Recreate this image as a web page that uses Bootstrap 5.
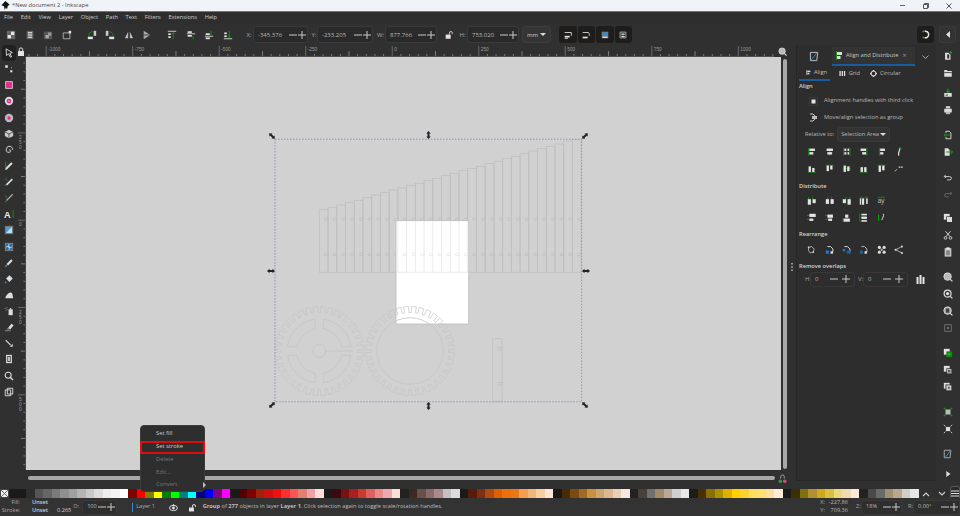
<!DOCTYPE html>
<html lang="en">
<head>
<meta charset="UTF-8">
<title>Inkscape</title>
<link href="https://cdn.jsdelivr.net/npm/bootstrap@5.3.0/dist/css/bootstrap.min.css" rel="stylesheet">
<style>
    html, body { height: 100%; overflow: hidden; }
    body { background: #303030; color: #cfcfcf; font: 6px/1 "Open Sans", "Liberation Sans", sans-serif; }
    svg { display: block; }
    .app { width: 960px; height: 516px; }

    .titlebar { height: 12px; background: #f0f4f9; color: #444; border-bottom: 1px solid #777; font-size: 5.7px; flex: none; }
    .win-icon { margin: 0 2px 0 1px; width: 9px; height: 9px; }
    .win-btn { width: 23px; height: 11px; }

    .menubar { height: 12px; gap: 7.7px; padding-left: 4px; background: #2e2e2e; font-size: 5.7px; flex: none; }

    .toolbar { height: 21px; padding-left: 2px; background: #303030; flex: none; }
    .tbtn { width: 18.5px; height: 17px; }
    .tbtn svg { width: 10px; height: 10px; }
    .tgroup-gap { margin-left: 6.5px; }
    .tlabel { color: #a8a8a8; flex: none; }
    .spinbox { height: 17px; background: #2a2a2a; border: 1px solid #393939; border-radius: 3px; padding-left: 4px; color: #b8b8b8; flex: none; }
    .spinbox .pm { width: 8px; height: 8px; margin-right: 1px; }
    .lb-x { width: 6.5px; margin-left: 9.5px; }
    .lb-y { width: 5.5px; margin-left: 3.5px; }
    .lb-w { width: 8px; margin-left: 4px; }
    .lb-h { width: 7.5px; margin-left: 1px; }
    .lb-z { width: 5px; margin-left: 8px; }
    .lb-r { width: 5px; margin-left: 6px; }
    .sp-x { width: 55px; }
    .sp-y { width: 56px; }
    .sp-w { width: 52px; }
    .sp-h { width: 52px; }
    .lock-gap { margin-left: 3px; }
    .unit-btn { width: 29px; height: 17px; margin-left: 3px; background: #353535; border: 1px solid #3d3d3d; border-radius: 3px; gap: 2px; }
    .caret-d { width: 0; height: 0; border-left: 3px solid transparent; border-right: 3px solid transparent; border-top: 3px solid #ddd; }
    .dark-btn { background: #1f1d1c; border-radius: 3px; }
    .dbtn-w { width: 17.5px; height: 17px; margin-right: 1px; }
    .plain-btn { width: 17px; height: 17px; background: #333; border: 1px solid #3a3a3a; border-radius: 3px; }

    .workspace { height: 444px; flex: none; }
    .tools { width: 17px; background: #303030; flex: none; }
    .tool { height: 16.14px; }
    .tool svg { width: 10px; height: 10px; }
    .tool-on { background: #202020; border-radius: 3px; width: 14px; margin-left: 2px; }

    .canvas-col { width: 770px; flex: none; }
    .ruler-top-row { height: 12px; }
    .ruler-corner { width: 9px; }
    .ruler-corner svg { width: 8px; height: 9px; }
    .ruler-side { width: 9px; }
    .canvas-row { height: 413px; }
    .stage { width: 755px; height: 413px; background: #d1d1d1; }
    .vscroll-wrap { width: 6px; padding: 2px 0 1px 2px; }
    .vscroll-wrap div { width: 4px; height: 100%; background: #a8a8a8; border-radius: 2px; }
    .zoom-fix { width: 9px; height: 9px; margin-left: 0; }
    .hscroll-row { height: 19px; padding-left: 11px; padding-top: 6px; }
    .hscroll { width: 750px; height: 4px; background: #a8a8a8; border-radius: 2px; }
    .corner-icon { width: 9px; height: 10px; margin-left: 3px; margin-top: -2px; }

    .dock { width: 149px; flex: none; }
    .dock-grip { width: 9px; color: #ccc; }
    .dock-panel { width: 140px; height: 436px; background: #2d2d2d; border-left: 1px solid #272727; border-bottom: 1px solid #272727; }
    .dock-tabs { height: 21px; padding-top: 2px; }
    .dtab-icon { width: 35px; }
    .dtab-icon svg { width: 11px; height: 11px; }
    .dtab { width: 83px; height: 19px; border-bottom: 2px solid #1b5c9e; background: #333; gap: 3px; padding-left: 4px; color: #c8c8c8; font-size: 5.7px; }
    .dtab svg { width: 7px; height: 9px; }
    .dtab-x { margin-left: 1px; color: #999; font-size: 7px; }
    .dtab-more { width: 20px; }
    .subtabs { height: 15px; padding-left: 2px; }
    .stab { height: 15px; gap: 3px; padding: 0 3px 0 7px; color: #bdbdbd; font-size: 5.7px; }
    .stab svg { width: 7px; height: 7px; }
    .stab-on { border-bottom: 2px solid #1b5c9e; width: 31px; margin-right: 2px; }
    .stab-grid { width: 31px; }
    .sect { padding-left: 2px; color: #d4d4d4; font-weight: 600; font-size: 5.7px; }
    .sect-a { height: 12px; }
    .sect-b { height: 14.5px; padding-top: 3.5px; }
    .check-row { height: 16.5px; padding-left: 12px; gap: 6px; color: #b8b8b8; font-size: 5.7px; }
    .check-row svg { width: 9px; height: 9px; }
    .rel-row { height: 17px; padding-left: 8px; gap: 3px; font-size: 5.7px; color: #b8b8b8; }
    .rel-btn { width: 53px; height: 15px; background: #333; border: 1px solid #3a3a3a; border-radius: 3px; padding: 0 3px; }
    .iconrow { height: 17.2px; padding-left: 6.5px; }
    .iconrow .ib { width: 17.3px; }
    .iconrow svg { width: 9.500px; height: 9.500px; }
    .ov-row { height: 16px; padding-left: 8px; color: #a8a8a8; margin-top: -1px; }
    .ov-lb { width: 5px; flex: none; }
    .sp-ov { width: 45px; height: 15px; margin-right: 3px; background: #2d2d2d; border-color: #383838; }
    .sp-ov .pm { margin-right: 4px; }
    .ov-icon { width: 9px; height: 9px; margin-left: 5px; }

    .cmdbar { width: 24px; padding-top: 2.5px; flex: none; }
    .cmd { height: 17px; }
    .cmd svg { width: 10px; height: 10px; }
    .cmd-sep { height: 7.8px; }
    .cmd-sep-s { height: 3px; }

    .palette-bar { height: 9px; flex: none; }
    .pal-x { width: 9px; height: 9px; background: #eee; border: 1px solid #444; }
    .swatches { width: 909px; }
    .swatch { flex: 1 1 0; }
    .pal-btn { width: 16px; }
    .pal-btn svg { width: 8px; height: 6px; }
    .pal-menu { width: 10px; height: 14px; margin-top: -3px; background: #2a2a2a; border: 1px solid #555; border-radius: 2px; }
    .pal-menu svg { width: 8px; height: 7px; }

    .statusbar { height: 18px; flex: none; background: #333; font-size: 5.6px; }
    .fs-box { width: 72px; }
    .fs-l { width: 20px; text-align: right; color: #aaa; }
    .fs-v { width: 27px; padding-left: 12px; white-space: nowrap; font-weight: 600; }
    .fs-line { height: 8px; }
    .op-label { margin-left: 2px; color: #aaa; }
    .sp-o { width: 35px; height: 15px; margin-left: 3px; background: #2e2e2e; }
    .layer-mark { width: 1px; height: 9px; background: #2f8fd8; margin-left: 15px; margin-right: 3px; }
    .layer-name { width: 24px; color: #aaa; }
    .st-icon { width: 9px; height: 9px; margin-left: 9px; }
    .st-icon2 { margin-left: 10px; }
    .msg { margin-left: 6px; width: 255px; white-space: nowrap; font-size: 5.65px; color: #bdbdbd; }
    .coords { width: 28px; margin-left: 365px; color: #aaa; }
    .coord-line { height: 8px; }
    .coord-v { flex-grow: 1; text-align: right; color: #b5b5b5; }
    .sp-z { width: 41px; height: 15px; background: #2e2e2e; }
    .sp-r { width: 47px; height: 15px; background: #2e2e2e; }

    .ctx-menu { left: 140px; top: 425px; width: 65px; height: 67px; min-width: 0; padding: 2px 0 0; background: #2e2e2e; border: 1px solid #3c3c3c; border-radius: 4px; font-size: 5.8px; z-index: 5; }
    .ctx-item { height: 12.6px; padding: 0 0 0 15px; color: #cfcfcf; display: flex; align-items: center; }
    .ctx-item.disabled { color: #777; }
    .ctx-red { border: 2px solid #d90f0f; padding-left: 14px; width: 65px; margin-left: -1px; height: 13px; }
    .ctx-arrow { margin-left: 26px; border-top: 3px solid transparent; border-bottom: 3px solid transparent; border-left: 3px solid #bbb; }
</style>
</head>
<body>

<svg width="0" height="0" class="position-absolute">
    <symbol id="minus" viewBox="0 0 8 8"><path d="M0 4h8" stroke="#c8c8c8" stroke-width="1"/></symbol>
    <symbol id="plus" viewBox="0 0 8 8"><path d="M0 4h8M4 0v8" stroke="#c8c8c8" stroke-width="1"/></symbol>
</svg>

<div class="app d-flex flex-column position-relative">

    <!-- window title -->
    <div class="titlebar d-flex align-items-center">
        <svg class="win-icon" viewBox="0 0 12 12"><path d="M6 0L11.500 5 9 6.500 8 11 6.500 8.500 5 12 4 7 .5 5.500z" fill="#111"/></svg>
        <span>*New document 2 - Inkscape</span>
        <div class="ms-auto d-flex">
            <div class="win-btn d-flex align-items-center justify-content-center"><svg width="5" height="5" viewBox="0 0 5 5"><path d="M0 2.500h5" stroke="#666"/></svg></div>
            <div class="win-btn d-flex align-items-center justify-content-center"><svg width="6" height="6" viewBox="0 0 6 6"><path d="M.5 1.500h4v4h-4zM1.500 1.500v-1h4v4h-1" fill="none" stroke="#555"/></svg></div>
            <div class="win-btn d-flex align-items-center justify-content-center"><svg width="6" height="6" viewBox="0 0 6 6"><path d="M.5.5l5 5M5.500.5l-5 5" stroke="#555"/></svg></div>
        </div>
    </div>

    <!-- menu -->
    <div class="menubar d-flex align-items-center">
        <span>File</span><span>Edit</span><span>View</span><span>Layer</span><span>Object</span><span>Path</span><span>Text</span><span>Filters</span><span>Extensions</span><span>Help</span>
    </div>

    <!-- commands bar -->
    <div class="toolbar d-flex align-items-center">
        <div id="tbGroup1" class="d-flex"></div>
        <div id="tbGroup2" class="d-flex tgroup-gap"></div>
        <div id="tbGroup3" class="d-flex tgroup-gap"></div>
        <span class="tlabel lb-x">X:</span>
        <div class="spinbox sp-x d-flex align-items-center"><span class="flex-grow-1">-345.376</span><svg class="pm"><use href="#minus"/></svg><svg class="pm"><use href="#plus"/></svg></div>
        <span class="tlabel lb-y">Y:</span>
        <div class="spinbox sp-y d-flex align-items-center"><span class="flex-grow-1">-233.205</span><svg class="pm"><use href="#minus"/></svg><svg class="pm"><use href="#plus"/></svg></div>
        <span class="tlabel lb-w">W:</span>
        <div class="spinbox sp-w d-flex align-items-center"><span class="flex-grow-1">877.766</span><svg class="pm"><use href="#minus"/></svg><svg class="pm"><use href="#plus"/></svg></div>
        <div class="tbtn lock-gap d-flex align-items-center justify-content-center"><svg viewBox="0 0 12 12"><rect x="2" y="5.500" width="6" height="5" fill="#e4e4e4"/><path d="M6.500 5.500V3.500a1.700 1.700 0 0 1 3.400 0V5" fill="none" stroke="#e4e4e4"/></svg></div>
        <span class="tlabel lb-h">H:</span>
        <div class="spinbox sp-h d-flex align-items-center"><span class="flex-grow-1">753.020</span><svg class="pm"><use href="#minus"/></svg><svg class="pm"><use href="#plus"/></svg></div>
        <div class="unit-btn d-flex align-items-center justify-content-center"><span>mm</span><span class="caret-d"></span></div>
        <div id="tbGroup4" class="d-flex ms-2"></div>
        <div class="ms-auto d-flex me-1">
            <div class="dark-btn dbtn-w d-flex align-items-center justify-content-center"><svg width="11" height="11" viewBox="0 0 12 12"><path d="M5 2.500a3.600 3.600 0 1 1 0 7" fill="none" stroke="#e8e8e8" stroke-width="1.600"/><path d="M3.500 2v1.600M3.500 8.500v1.600" stroke="#18a818" stroke-width="1.800"/></svg></div>
            <div class="plain-btn d-flex align-items-center justify-content-center ms-1"><svg width="6" height="7" viewBox="0 0 6 7"><path d="M5 0v7L1 3.500z" fill="#ddd"/></svg></div>
        </div>
    </div>

    <div class="workspace d-flex">
        <!-- tool box -->
        <div id="tools" class="tools d-flex flex-column"></div>

        <!-- rulers, canvas, scrollbars -->
        <div class="canvas-col d-flex flex-column">
            <div class="ruler-top-row d-flex">
                <div class="ruler-corner d-flex align-items-center justify-content-center"><svg viewBox="0 0 8 9"><rect x="1" y="4" width="6" height="5" rx=".5" fill="#e4e4e4"/><path d="M2.300 4V2.600a1.700 1.700 0 0 1 3.400 0V4" fill="none" stroke="#e4e4e4"/></svg></div>
                <svg id="rulerTop" width="755" height="12" viewBox="26 0 755 12"></svg>
                <svg class="zoom-fix align-self-center ms-1" viewBox="0 0 12 12"><circle cx="5.500" cy="5.500" r="4.300" fill="#bbb" stroke="#ddd"/><path d="M8.500 8.500l3 3" stroke="#ddd" stroke-width="1.500"/></svg>
            </div>
            <div class="canvas-row d-flex">
                <svg id="rulerLeft" class="ruler-side" width="9" height="413" viewBox="0 57 9 413"></svg>
                <div class="stage"><svg id="drawing" width="755" height="413" viewBox="26 57 755 413"></svg></div>
                <div class="vscroll-wrap"><div></div></div>
            </div>
            <div class="hscroll-row d-flex">
                <div class="hscroll"></div>
                <svg class="corner-icon" viewBox="0 0 10 11"><path d="M3 5V3a2 2 0 0 1 4 0v2" fill="none" stroke="#aaa"/><circle cx="2.500" cy="8" r="2" fill="#2a9a4a"/><circle cx="7.500" cy="8" r="2" fill="#d64a7a"/></svg>
            </div>
        </div>

        <!-- Align and Distribute dock -->
        <div class="dock d-flex">
            <div class="dock-grip d-flex align-items-center justify-content-center"><svg width="2" height="8" viewBox="0 0 2 8"><path d="M1 0v1.400M1 3.300v1.400M1 6.600V8" stroke="#ddd" stroke-width="1.200"/></svg></div>
            <div class="dock-panel">
                <div class="dock-tabs d-flex">
                    <div class="dtab-icon d-flex align-items-center justify-content-center"><svg viewBox="0 0 12 12"><path d="M1.500 1.500h8l-1 9h-7z" fill="none" stroke="#ccc"/><path d="M1.500 11l7-9" stroke="#3a8fc8"/></svg></div>
                    <div class="dtab d-flex align-items-center"><svg viewBox="0 0 7 9"><path d="M.5 0v9" stroke="#109a10"/><rect x="1" y="1" width="5" height="3" fill="#ddd"/><rect x="1" y="5" width="3.500" height="3" fill="#ddd"/></svg><span>Align and Distribute</span><span class="dtab-x">×</span></div>
                    <div class="dtab-more d-flex align-items-center justify-content-center"><svg width="7" height="4" viewBox="0 0 7 4"><path d="M.5.5L3.500 3.500 6.500.5" fill="none" stroke="#aaa"/></svg></div>
                </div>
                <div class="subtabs d-flex">
                    <div class="stab stab-on d-flex align-items-center"><svg viewBox="0 0 8 8"><path d="M1 0v8" stroke="#dcdcdc"/><rect x="2" y="1" width="5" height="2.400" fill="#ddd"/><rect x="2" y="4.600" width="3.400" height="2.400" fill="#ddd"/></svg><span>Align</span></div>
                    <div class="stab stab-grid d-flex align-items-center"><svg viewBox="0 0 8 8"><path d="M.5 1h1.600v6H.5zM3.200 1h1.600v6H3.200zM5.900 1h1.600v6H5.900z" fill="#ddd"/></svg><span>Grid</span></div>
                    <div class="stab d-flex align-items-center"><svg viewBox="0 0 8 8"><circle cx="4" cy="4" r="2.800" fill="none" stroke="#ddd" stroke-width="1.200"/><circle cx="4" cy=".9" r=".9" fill="#ddd"/><circle cx="4" cy="7.100" r=".9" fill="#ddd"/><circle cx=".9" cy="4" r=".9" fill="#ddd"/><circle cx="7.100" cy="4" r=".9" fill="#ddd"/></svg><span>Circular</span></div>
                </div>
                <div class="sect sect-a d-flex align-items-center">Align</div>
                <div class="check-row d-flex align-items-center"><svg viewBox="0 0 9 9"><rect x=".5" y=".5" width="8" height="8" fill="none" stroke="#0c6a0c" stroke-dasharray="1 1"/><rect x="2.500" y="2.500" width="4" height="4" fill="#e4e4e4"/></svg><span>Alignment handles with third click</span></div>
                <div class="check-row d-flex align-items-center"><svg viewBox="0 0 9 9"><path d="M1 1h3l2 2v3L4 8H1" fill="none" stroke="#ccc"/><rect x="3" y="3" width="5" height="3" fill="#bbb"/></svg><span>Move/align selection as group</span></div>
                <div class="rel-row d-flex align-items-center"><span>Relative to:</span><div class="rel-btn d-flex align-items-center justify-content-between"><span>Selection Area</span><span class="caret-d"></span></div></div>
                <div id="row1" class="iconrow d-flex align-items-center"></div>
                <div id="row2" class="iconrow d-flex align-items-center"></div>
                <div class="sect sect-b d-flex align-items-center">Distribute</div>
                <div id="row3" class="iconrow d-flex align-items-center"></div>
                <div id="row4" class="iconrow d-flex align-items-center"></div>
                <div class="sect sect-b d-flex align-items-center">Rearrange</div>
                <div id="row5" class="iconrow d-flex align-items-center"></div>
                <div class="sect sect-b d-flex align-items-center">Remove overlaps</div>
                <div class="ov-row d-flex align-items-center">
                    <span class="ov-lb">H:</span>
                    <div class="spinbox sp-ov d-flex align-items-center"><span class="flex-grow-1">0</span><svg class="pm"><use href="#minus"/></svg><svg class="pm"><use href="#plus"/></svg></div>
                    <span class="ov-lb">V:</span>
                    <div class="spinbox sp-ov d-flex align-items-center"><span class="flex-grow-1">0</span><svg class="pm"><use href="#minus"/></svg><svg class="pm"><use href="#plus"/></svg></div>
                    <svg class="ov-icon" viewBox="0 0 9 9"><path d="M.5 2h2v7h-2zM3.500 0h2v9h-2zM6.500 2h2v7h-2z" fill="#e4e4e4"/></svg>
                </div>
            </div>
        </div>

        <!-- right hand commands -->
        <div id="cmdbar" class="cmdbar d-flex flex-column"></div>
    </div>

    <!-- palette -->
    <div class="palette-bar d-flex">
        <svg class="pal-x" viewBox="0 0 9 9"><path d="M0 0l9 9M9 0L0 9" stroke="#b33" stroke-width="1.200"/></svg>
        <div id="swatches" class="swatches d-flex"></div>
        <div class="pal-btn d-flex align-items-center justify-content-center"><svg viewBox="0 0 8 6"><path d="M1 5l3-3 3 3" fill="none" stroke="#ccc" stroke-width="1.200"/></svg></div>
        <div class="pal-btn d-flex align-items-center justify-content-center"><svg viewBox="0 0 8 6"><path d="M1 1l3 3 3-3" fill="none" stroke="#ccc" stroke-width="1.200"/></svg></div>
        <div class="pal-menu d-flex align-items-center justify-content-center"><svg viewBox="0 0 8 7"><path d="M0 1h8M0 3.500h8M0 6h8" stroke="#ddd" stroke-width="1.200"/></svg></div>
    </div>

    <!-- status bar -->
    <div class="statusbar d-flex align-items-center">
        <div class="fs-box d-flex flex-column">
            <div class="fs-line d-flex align-items-center"><span class="fs-l">Fill:</span><span class="fs-v">Unset</span></div>
            <div class="fs-line d-flex align-items-center"><span class="fs-l">Stroke:</span><span class="fs-v">Unset</span><span class="ms-auto">0.265</span></div>
        </div>
        <span class="op-label">O:</span>
        <div class="spinbox sp-o d-flex align-items-center"><span class="flex-grow-1">100</span><svg class="pm"><use href="#minus"/></svg><svg class="pm"><use href="#plus"/></svg></div>
        <span class="layer-mark"></span>
        <span class="layer-name">Layer 1</span>
        <svg class="st-icon" viewBox="0 0 9 9"><ellipse cx="4.500" cy="5" rx="4" ry="2.700" fill="none" stroke="#ddd"/><circle cx="4.500" cy="5" r="1.500" fill="#ddd"/><path d="M4.500 1v2" stroke="#ddd"/></svg>
        <svg class="st-icon st-icon2" viewBox="0 0 9 9"><rect x="1" y="4.500" width="5" height="4" fill="#e4e4e4"/><path d="M4.500 4.500V3a1.500 1.500 0 0 1 3 0v1" fill="none" stroke="#e4e4e4"/></svg>
        <span class="msg"><b>Group</b> of <b>277</b> objects in layer <b>Layer 1</b>. Click selection again to toggle scale/rotation handles.</span>
        <div class="coords d-flex flex-column">
            <div class="coord-line d-flex align-items-center"><span>X:</span><span class="coord-v">-227.86</span></div>
            <div class="coord-line d-flex align-items-center"><span>Y:</span><span class="coord-v">709.36</span></div>
        </div>
        <span class="tlabel lb-z">Z:</span>
        <div class="spinbox sp-z d-flex align-items-center"><span class="flex-grow-1">18%</span><svg class="pm"><use href="#minus"/></svg><svg class="pm"><use href="#plus"/></svg></div>
        <span class="tlabel lb-r">R:</span>
        <div class="spinbox sp-r d-flex align-items-center"><span class="flex-grow-1">0.00°</span><svg class="pm"><use href="#minus"/></svg><svg class="pm"><use href="#plus"/></svg></div>
    </div>

    <!-- swatch context menu -->
    <div class="dropdown-menu show position-absolute ctx-menu">
        <div class="dropdown-item ctx-item">Set fill</div>
        <div class="dropdown-item ctx-item ctx-red">Set stroke</div>
        <div class="dropdown-item ctx-item disabled">Delete</div>
        <div class="dropdown-item ctx-item disabled">Edit...</div>
        <div class="dropdown-item ctx-item disabled">Convert<span class="ctx-arrow"></span></div>
    </div>
</div>

<script src="https://cdn.jsdelivr.net/npm/bootstrap@5.3.0/dist/js/bootstrap.bundle.min.js"></script>
<script>
    const W = '#e4e4e4', G = '#109a10', D = '#8a8a8a', B = '#2f8fd8', P = '#e8278f';
    const rect = (x, y, w, h, f = W) => `<rect x="${x}" y="${y}" width="${w}" height="${h}" fill="${f}"/>`;
    const line = (d, c = G, sw = 1) => `<path d="${d}" stroke="${c}" stroke-width="${sw}" fill="none"/>`;

    const icons = {
        selall: rect(1, 1, 10, 10, '#666') + rect(2, 6, 4, 4) + rect(6, 2, 4, 4),
        seltouch: rect(2, 1, 8, 10, '#666') + line('M3.500 3h5M3.500 5h5M3.500 7h5M3.500 9h5', W),
        seldim: rect(1, 2, 10, 9, '#555') + rect(3, 6, 4, 4, '#aaa') + rect(6, 3, 4, 4, '#999'),
        desel: line('M1.500 3.500h8v7h-8z', '#bbb') + rect(8, 1, 3, 3),
        rotl: rect(1, 8, 6, 3) + rect(8, 1, 3, 6, '#ccc') + line('M2 7A5 5 0 0 1 7 2'),
        rotr: rect(1, 1, 3, 6, '#ccc') + rect(5, 8, 6, 3) + line('M5 2A5 5 0 0 1 10 7'),
        fliph: '<path d="M5 2v8H1zM7 2v8h4z" fill="#bbb"/>',
        flipv: '<path d="M2 1l8 5-8 5z" fill="#aaa"/><path d="M2 6h8" stroke="#333"/>',
        rtop: line('M1 1.500h10', W) + line('M7.500 11V3M5.500 5l2-2 2 2') + rect(1.500, 4, 3, 2) + rect(1.500, 7.500, 3, 2),
        rup: line('M1 4.500h10', W) + rect(2, 1.500, 5, 2) + rect(2, 6, 5, 2) + line('M8.500 11V7'),
        rdown: line('M1 7.500h10', W) + rect(2, 4, 5, 2) + rect(2, 9, 5, 2) + line('M8.500 1v5'),
        rbot: line('M1 10.500h10', W) + line('M7.500 1v8M5.500 7l2 2 2-2') + rect(1.500, 3, 3, 2) + rect(1.500, 6.500, 3, 2),
        sc1: line('M2 3h8v4', W) + rect(2, 7, 6, 2) + line('M2 10h4', W),
        sc2: line('M2 3h7l1 2v2', W) + rect(2, 8, 6, 2),
        sc3: rect(2, 2, 8, 8, '#777') + rect(3, 3, 6, 4, B) + rect(3, 8, 6, 1.500),
        sc4: line('M2.500 2.500h7v7h-7z', '#bbb') + rect(4, 4, 4, 2, '#9cc') + rect(4, 7, 4, 1.500),

        sel: '<path d="M2.500 1L10 5.500 7 6.500 9 10.500 7.500 11 5.500 7 3 9z" fill="#222" stroke="#eee"/>',
        node: rect(1.500, 1.500, 3, 3) + rect(7.500, 7.500, 2.500, 2.500) + line('M9 3.500v2', '#888'),
        rct: rect(1.500, 1.500, 9, 9, '#ddd') + rect(2.500, 2.500, 7, 7, P),
        ell: '<circle cx="6" cy="6" r="5" fill="#ddd"/><circle cx="6" cy="6" r="2.800" fill="' + P + '"/><circle cx="6" cy="6" r="1" fill="#ddd"/>',
        star: '<circle cx="6" cy="6" r="5" fill="#bbb"/><circle cx="6" cy="6" r="2" fill="' + P + '"/>',
        box3: '<path d="M6 1l5 2.500v5L6 11 1 8.500v-5z" fill="#ccc"/><path d="M6 6L1 3.500M6 6l5-2.500M6 6v5" stroke="#444"/>',
        spiral: '<path d="M6 6a1.500 1.500 0 0 1 2 1.500 3 3 0 0 1-5 0A4.500 4.500 0 0 1 6 1.500 4.500 4.500 0 0 1 10.500 6" fill="none" stroke="#bbb" stroke-width="1.300"/>',
        pencil: line('M2 10L9.500 2.500', '#ddd', 2.500) + line('M2 1v8', G, 1.200) + line('M1 11L2.500 9.500', '#888'),
        pen: line('M3 9.500L10 2.500', '#ddd', 2) + line('M1.500 1.500l2.500 3M1.500 9v2', G, 1.200),
        calli: line('M3 9L10.500 1.500', '#aaa', 1.500) + line('M1.500 3l2 3M1 10.500h2', G, 1.200),
        txt: `<text x="0" y="10.500" font-family="Liberation Sans, sans-serif" font-weight="700" font-size="11" fill="#eee">A</text>` + line('M11 1v10'),
        grad: rect(1, 1, 10, 10, '#777') + rect(2.500, 2.500, 7, 7, '#4aa0dc') + '<path d="M2.500 9.500l7-7v7z" fill="#bfe0f5"/>',
        mesh: rect(1, 1, 10, 10, '#777') + rect(2.500, 2.500, 7, 7, '#2b6ea8') + line('M2.500 6c3-2 4 2 7 0M6 2.500c-2 3 2 4 0 7', '#dfefff'),
        drop: line('M4 8l5.500-5.500', '#ddd', 2.500) + line('M1.500 10.500l2-2', B, 1.800),
        bucket: '<path d="M6.500 1.500l4 4-4 4-4-4z" fill="#ddd"/>' + line('M2 9v2', B, 1.800),
        tweak: '<path d="M1.500 10c1-4 4-7 6.500-7s2.500 4 3 7z" fill="#ddd"/>',
        spray: rect(5.500, 4, 5, 7, '#ddd') + '<path d="M6.500 4l1.500-2 1.500 2z" fill="#ddd"/><path d="M1 3h1M3 2h1M2 5h1M4 4h1" stroke="#aaa"/>',
        eraser: '<path d="M5 7l4-5 2.500 2-4 5z" fill="#ddd"/><path d="M1 10.500h7" stroke="#999"/><path d="M3 9l2-2 2 2z" fill="#999"/>',
        conn: line('M2 2.500l6 6', '#ddd', 1.400) + '<path d="M7 10.500h3.500V7z" fill="#ddd"/>',
        pagetool: rect(2.500, 1, 7, 10, '#ddd') + rect(4, 2.500, 4, 7, '#333') + rect(5, 3.500, 2, 5, '#ddd'),
        zoom: '<circle cx="5" cy="5" r="3.600" fill="none" stroke="#ddd" stroke-width="1.300"/>' + line('M7.800 7.800l3 3', '#ddd', 1.500),
        pages: line('M4 1.500h6.500v7H4zM1.500 3.500H8v7H1.500z', '#ddd', 1.100),

        newdoc: '<path d="M2.500 2h4l2.500 2.500V10.500h-6.500z" fill="#ddd"/>' + rect(5, 4, 2.500, 5, '#333') + '<circle cx="9.500" cy="1.800" r="1.400" fill="' + G + '"/>',
        open: '<path d="M1.500 2.500h3l1 1h5v7h-9z" fill="#ddd"/>' + line('M1.500 5.500h9', '#333'),
        save: line('M6 1v4M4 3.500l2 2 2-2', G, 1.300) + rect(1.500, 6, 9, 4.500, '#ddd') + rect(3, 8, 3, 1, '#333'),
        print: rect(3.500, 1.500, 5, 2.500, '#ddd') + rect(1.500, 4.500, 9, 4.500, '#ddd') + rect(3.500, 8, 5, 3, '#bbb'),
        imp: line('M3.500 3.500v-2h4l2 2v7h-6v-2', '#ddd', 1.100) + line('M8 6H1.500M3.500 4l-2 2 2 2', G, 1.200),
        exp: '<path d="M2 1.500h4l2 2v7H2z" fill="#ddd"/>' + line('M4 6h7.500M9.500 4l2 2-2 2', G, 1.200),
        undo: line('M3 3.500L1.500 5.500 3.500 7M2 5.500h6a2 2 0 0 1 0 4H5', '#ccc', 1.200),
        redo: line('M9 3.500l1.500 2L8.500 7M10 5.500H4a2 2 0 0 0 0 4h3', '#666', 1.200),
        dup: rect(1, 1, 7, 7, '#ddd') + rect(4, 4, 7, 7, '#333') + rect(4.800, 4.800, 6, 6, '#ddd'),
        cut: line('M3 1.500L8.500 8M9 1.500L3.500 8', '#ddd', 1.100) + '<circle cx="3" cy="9.500" r="1.600" fill="none" stroke="#ddd"/><circle cx="9" cy="9.500" r="1.600" fill="none" stroke="#ddd"/>',
        paste: rect(2, 1.500, 8, 10, '#ccc') + rect(4, .5, 4, 2, '#eee') + rect(3.500, 4, 5, 6, '#888'),
        zsel: '<circle cx="5.500" cy="5.500" r="4.500" fill="#bbb" stroke="#ddd"/>' + line('M8.800 8.800l2.500 2.500', '#ddd', 1.500),
        zdraw: '<circle cx="5.500" cy="5.500" r="4.200" fill="none" stroke="#ddd" stroke-width="1.400"/><circle cx="5.500" cy="5.500" r="2" fill="#ddd"/>' + line('M8.800 8.800l2.500 2.500', '#ddd', 1.500),
        zpage: '<circle cx="5.500" cy="5.500" r="4.500" fill="#aaa" stroke="#ddd"/>' + rect(3.500, 3, 4, 5, '#444') + line('M8.800 8.800l2.500 2.500', '#ddd', 1.500),
        zcen: line('M2 2h8v8H2z', '#777') + line('M4.500 6h3M6 4.500v3', '#888'),
        grp: rect(1, 1, 7, 7) + rect(4, 4, 7, 7, '#0e8a0e') + rect(6.500, 6.500, 2, 2, '#2fd02f'),
        grp2: rect(1, 1, 7, 7, '#ddd') + rect(4, 4, 7, 7, '#333') + rect(5, 5, 5, 5, '#ddd') + rect(6, 6, 3, 3, '#555'),
        grp3: rect(1, 1, 7, 7, '#ddd') + rect(3, 3, 8, 8, '#333') + rect(4, 4, 6, 6, '#ccc') + rect(6, 6, 2, 2, '#444'),
        clipg: rect(3, 3, 6, 6, '#bbb') + line('M1 1l2 2M11 1L9 3M1 11l2-2M11 11L9 9', G, 1.400),
        clipw: rect(3.500, 3.500, 5, 5, '#ddd') + line('M1 1l2 2M11 1L9 3M1 11l2-2M11 11L9 9', '#bbb', 1.200),
        edit: line('M1.500 1.500h8l-1 9h-7z', '#bbb') + line('M2 11l7-9', '#2f9ad0', 1.200),
        arrow: '<path d="M4 2.500v7L9 6z" fill="#ddd"/>',

        // align rows: white bars against a green edge
        av1: line('M2 1v10') + rect(3, 2, 7, 3) + rect(3, 6.500, 5, 3),
        av2: line('M6 1v10') + rect(2, 2, 8, 3) + rect(3, 6.500, 6, 3),
        av3: line('M2 1v10M10 1v10') + rect(3, 2, 2.500, 3) + rect(3, 6.500, 2.500, 3) + rect(7, 2, 2, 3) + rect(7, 6.500, 2, 3),
        av4: line('M10 1v10') + rect(2, 2, 7, 3) + rect(4, 6.500, 5, 3),
        av5: line('M3 1v10') + rect(4, 2, 6, 3) + rect(4, 6.500, 4, 3),
        av6: line('M8 1C7 4 5 6 6 11', W, 1.500) + rect(7.500, 1, 2, 2, G),
        ah1: line('M1 10.500h10') + rect(2, 3, 3, 7) + rect(6.500, 5, 3, 5),
        ah2: line('M1 1.500h10') + rect(2, 2, 3, 7) + rect(6.500, 2, 3, 5),
        ah3: line('M1 6h10') + rect(2, 2, 3, 8) + rect(6.500, 3, 3, 6),
        ah4: line('M1 10.500h10') + rect(2, 4, 3, 6) + rect(6.500, 4, 3, 6),
        ah5: line('M1 1.500h10') + rect(2, 2, 3, 8) + rect(6.500, 2, 3, 6),
        ah6: line('M1 9c2-1 2-2 3-2', W) + rect(6, 3, 2, 2, '#bbb') + rect(9, 3, 2, 2, '#bbb'),
        dh1: line('M2 1v3M7 1v3') + rect(1, 4, 4, 7) + rect(7, 4, 4, 5),
        dh2: line('M3 1v3M8 1v3') + rect(1, 4, 4, 6) + rect(7, 4, 4, 6),
        dh3: line('M5 1v3M10 1v3') + rect(1, 4, 4, 5) + rect(7, 4, 4, 7),
        dh4: line('M1 1.500h4M7 1.500h4') + rect(1, 3, 1.500, 8) + rect(3.500, 3, 3, 8) + rect(9, 3, 2, 7),
        dh5: `<text x="1" y="9" font-family="Liberation Sans, sans-serif" font-size="8" fill="#bbb">ay</text>` + line('M1 1.500h9'),
        dv1: line('M0 3h3M0 8h3') + rect(3, 1, 8, 4) + rect(3, 7, 5, 3),
        dv2: line('M0 3h3M0 8h3') + rect(3, 2, 7, 4) + rect(4, 7, 5, 3),
        dv3: line('M0 8h3M0 11h3') + rect(4, 2, 4, 4) + rect(2, 7, 8, 4),
        dv4: line('M1 1v10') + rect(3, 1, 7, 2) + rect(3, 4.500, 7, 3) + rect(3, 9, 7, 2),
        dv5: line('M2 2v8', G, 1.500) + line('M8 1c1 3-1 5-2 8', W, 1.200),
        rr1: line('M2 3l4-1 3 3-1 4-4 1-2-3z', '#ccc') + '<circle cx="2" cy="3" r="1" fill="#ddd"/><circle cx="8" cy="9" r="1" fill="#ddd"/>',
        rr2: line('M3 2h4l3 3v4', '#ddd', 1.200) + rect(1, 7, 4, 4, '#1f78c8') + rect(7, 8, 3, 3),
        rr3: line('M3 2h4l3 3v4', '#ddd', 1.200) + rect(1, 5, 3, 3, '#1f78c8') + rect(6, 7, 5, 4, '#1f5fa0'),
        rr4: line('M3 2h4l3 3v4', '#bbb', 1.200) + rect(1, 7, 4, 4, '#1f5fa0') + rect(7, 8, 3, 3),
        rr5: '<circle cx="3" cy="3" r="2" fill="#ddd"/><circle cx="9" cy="3" r="2" fill="#ddd"/><circle cx="3" cy="9" r="2" fill="#ddd"/><circle cx="9" cy="9" r="2" fill="#ddd"/><circle cx="6" cy="6" r="1.500" fill="#aaa"/>',
        rr6: line('M2 6l8-4M2 6l8 4', '#ccc') + '<circle cx="2" cy="6" r="1.300" fill="#ddd"/><circle cx="10" cy="2" r="1.300" fill="#ddd"/><circle cx="10" cy="10" r="1.300" fill="#ddd"/>',
    };
    const svgIcon = name => `<svg viewBox="0 0 12 12">${icons[name]}</svg>`;

    function fillToolbar(id, names, cls = '') {
        document.getElementById(id).innerHTML = names.map(n =>
            `<div class="tbtn ${cls} d-flex align-items-center justify-content-center">${svgIcon(n)}</div>`).join('');
    }
    fillToolbar('tbGroup1', ['selall', 'seltouch', 'seldim', 'desel']);
    fillToolbar('tbGroup2', ['rotl', 'rotr', 'fliph', 'flipv']);
    fillToolbar('tbGroup3', ['rtop', 'rup', 'rdown', 'rbot']);
    fillToolbar('tbGroup4', ['sc1', 'sc2', 'sc3', 'sc4'], 'dark-btn dbtn-w');

    document.getElementById('tools').innerHTML = ['sel', 'node', 'rct', 'ell', 'star', 'box3', 'spiral', 'pencil', 'pen', 'calli', 'txt', 'grad', 'mesh', 'drop', 'bucket', 'tweak', 'spray', 'eraser', 'conn', 'pagetool', 'zoom', 'pages']
        .map((n, i) => `<div class="tool ${i ? '' : 'tool-on'} d-flex align-items-center justify-content-center">${svgIcon(n)}</div>`).join('');

    const rows = {
        row1: ['av1', 'av2', 'av3', 'av4', 'av5', 'av6'],
        row2: ['ah1', 'ah2', 'ah3', 'ah4', 'ah5', 'ah6'],
        row3: ['dh1', 'dh2', 'dh3', 'dh4', 'dh5'],
        row4: ['dv1', 'dv2', 'dv3', 'dv4', 'dv5'],
        row5: ['rr1', 'rr2', 'rr3', 'rr4', 'rr5', 'rr6'],
    };
    Object.entries(rows).forEach(([id, names]) => {
        document.getElementById(id).innerHTML = names.map(n => `<div class="ib d-flex justify-content-center">${svgIcon(n)}</div>`).join('');
    });

    // "|" is a wide gap between groups, "." a narrow one
    document.getElementById('cmdbar').innerHTML = ['newdoc', 'open', '.', 'save', 'print', '|', 'imp', 'exp', '|', 'undo', 'redo', '|', 'dup', 'cut', 'paste', '|', 'zsel', 'zdraw', 'zpage', 'zcen', '|', 'grp', 'grp2', 'grp3', '|', 'clipg', 'clipw', '|', 'edit', '.', 'arrow']
        .map(n => n === '|' ? '<div class="cmd-sep"></div>' : n === '.' ? '<div class="cmd-sep-s"></div>'
            : `<div class="cmd d-flex align-items-center justify-content-center">${svgIcon(n)}</div>`).join('');

    // palette
    const colors = ['#1c1a18', '#1c1a18', '#2d2d2d', '#555', '#666', '#7b7b7b', '#8f8f8f', '#a0a0a0', '#b4b4b4', '#c8c8c8', '#dcdcdc', '#ededed', '#f4f4f4', '#fff',
        '#800000', '#f00', '#808000', '#ff0', '#008000', '#0f0', '#008080', '#0ff', '#000080', '#00f', '#800080', '#f0f',
        '#1c1a18', '#550000', '#800000', '#a02010', '#d01010', '#f01010', '#f83030', '#ff5555', '#e08070', '#f0a0a8', '#ffe0d8',
        '#1c1a18', '#3a0a10', '#7a1010', '#a82020', '#c83c30', '#e06060', '#e88a8a', '#f0a8b0', '#f8e0d8',
        '#222', '#3c2a20', '#6a5048', '#8a6a6a', '#a88a8a', '#c8c0c0', '#dcdce0',
        '#1c1a18', '#5a1a08', '#7d3010', '#b04a10', '#e06000', '#ec7010', '#e87818', '#f0a050', '#f0b878', '#f8d0a0', '#fde6d8',
        '#1a1a14', '#4a2a00', '#7a4a10', '#a06a20', '#c89040', '#c8a870', '#dcb890', '#e8d0b8', '#f4e8e0',
        '#222', '#4a4038', '#707070', '#a08868', '#b8a898', '#d0d0d0', '#e8e8e8',
        '#1c1c18', '#4a3000', '#8a7000', '#b09000', '#e0b000', '#ffd000', '#ffd030', '#ffe060', '#ffe070', '#fde0a0', '#fdecd8',
        '#1a1a1a', '#3a3000', '#807010', '#b09030', '#d0a820', '#d8c040', '#e8d880', '#f0d8b0', '#fde8dc',
        '#222', '#4a4a48', '#6a6a68', '#a09070', '#b8a890', '#d0d0c8', '#e8e8e8'];
    document.getElementById('swatches').innerHTML = colors.map(c => `<div class="swatch" style="background:${c}"></div>`).join('');

    // rulers
    const TICK = '#7c7c7c', STEP = 8.73, ZERO_X = 395.6, ZERO_Y = 220.2;
    let topMarks = '', leftMarks = '';
    for (let k = -42; k <= 44; k++) {
        const x = ZERO_X + k * STEP;
        if (x < 26 || x > 781) continue;
        const major = k % 10 === 0, mid = k % 5 === 0;
        topMarks += `<path d="M${x} ${major ? 1 : mid ? 6 : 9}V12" stroke="${major ? '#6a6a6a' : TICK}"/>`;
        if (major) topMarks += `<text x="${x + 2}" y="6" font-size="4.800" font-family="Liberation Sans, sans-serif" fill="#9a9a9a">${k * 25}</text>`;
    }
    for (let k = -19; k <= 29; k++) {
        const y = ZERO_Y + k * STEP;
        const major = k % 10 === 0, mid = k % 5 === 0;
        leftMarks += `<path d="M${major ? 1 : mid ? 4 : 6.500} ${y}H9" stroke="${major ? '#6a6a6a' : TICK}"/>`;
        if (major) [...String(Math.abs(k * 25))].forEach((ch, i) => {
            leftMarks += `<text x="2" y="${y + 6 + i * 5}" font-size="4.800" font-family="Liberation Sans, sans-serif" fill="#9a9a9a">${ch}</text>`;
        });
    }
    document.getElementById('rulerTop').innerHTML = topMarks + '<path d="M26 11.500H781" stroke="#555"/>';
    document.getElementById('rulerLeft').innerHTML = leftMarks + '<path d="M8.500 57V470" stroke="#444"/>';

    // the drawing on the canvas
    const S = '#bfbfbf', S2 = '#c4c4c4', FAINT = '#e6e6e6';
    let art = '';
    const tops = [253, 247, 240, 232, 226, 217, 210, 202, 195, 189, 181, 175, 166, 160, 152, 145, 136, 130, 124, 115, 109, 100, 94, 85, 78, 70, 64, 57, 48, 43];
    const BAR_X = 319.3, BAR_W = 8.73, BAR_B = 272.3;
    tops.forEach((t, i) => {
        const y = 125 + t / 3, x = BAR_X + i * BAR_W;
        art += `<rect x="${x}" y="${y}" width="${BAR_W}" height="${BAR_B - y}" fill="none" stroke="${S}" stroke-width=".8"/>`;
    });
    const slot = (x, y, c) => `<rect x="${x}" y="${y}" width="3.600" height="2.400" rx=".6" fill="none" stroke="${c}" stroke-width=".7"/>`;
    for (let i = 0; i < 30; i++) {
        const x = 324.6 + i * BAR_W;
        art += slot(x, 218.2, S) + slot(x, 253.2, S);
    }
    // white page sits on top; the bars show through it only faintly
    art += `<rect x="396" y="220.700" width="72.700" height="103.300" fill="#fff" stroke="#bdbdbd" stroke-width=".8"/>`;
    for (let i = 0; i < 30; i++) {
        const x = BAR_X + i * BAR_W;
        if (x > 396.5 && x < 468.5) art += `<path d="M${x} 221.100V${BAR_B}" stroke="${FAINT}" stroke-width=".8"/>`;
        const sx = 324.6 + i * BAR_W;
        if (sx > 396 && sx + 3.6 < 468.5) art += slot(sx, 253.2, FAINT);
    }
    art += `<path d="M396.400 ${BAR_B}H468.300" stroke="${FAINT}" stroke-width=".8"/>`;

    function gear(cx, cy) {
        const R = 44.5, r = 38.5, N = 36;
        let d = '';
        const pt = (rad, ang) => `${(cx + rad * Math.cos(ang)).toFixed(2)} ${(cy + rad * Math.sin(ang)).toFixed(2)}`;
        for (let i = 0; i < N; i++) {
            const a = i / N * 2 * Math.PI, w = 0.032, step = 2 * Math.PI / N;
            d += `${i ? 'L' : 'M'}${pt(R, a - w)}L${pt(r, a - w)}L${pt(r, a + w)}L${pt(R, a + w)}A${R} ${R} 0 0 1 ${pt(R, a + step - w)}`;
        }
        return `<path d="${d}Z" fill="none" stroke="${S2}" stroke-width=".7"/>`;
    }
    function ringQuad(cx, cy, sx, sy) {
        const o = 32, n = 22.7, g = 4.3;
        const ox = Math.sqrt(o * o - g * g), nx = Math.sqrt(n * n - g * g);
        const sweep = sx * sy > 0 ? 0 : 1;
        return `<path d="M${cx + sx * g} ${cy + sy * ox}A${o} ${o} 0 0 ${sweep} ${cx + sx * ox} ${cy + sy * g}L${cx + sx * nx} ${cy + sy * g}A${n} ${n} 0 0 ${1 - sweep} ${cx + sx * g} ${cy + sy * nx}Z" fill="none" stroke="${S2}" stroke-width=".8"/>`;
    }
    art += gear(319.3, 351) + gear(410, 351);
    art += `<circle cx="410" cy="351" r="33.300" fill="none" stroke="${S2}" stroke-width=".8"/>`;
    art += `<circle cx="319.300" cy="351" r="6.500" fill="none" stroke="${S2}" stroke-width=".8"/><path d="M325.800 351H352.700" stroke="${S2}" stroke-width=".8"/>`;
    [[1, 1], [1, -1], [-1, 1], [-1, -1]].forEach(([a, b]) => { art += ringQuad(319.3, 351, a, b); });
    art += `<rect x="492.700" y="338.700" width="9.300" height="62.500" fill="none" stroke="${S}" stroke-width=".8"/><path d="M497 347.500h5v2.500h-5M497 382.500h5v2.500h-5" fill="none" stroke="${S}" stroke-width=".8"/>`;

    art += `<rect x="275" y="139.200" width="306.600" height="262.600" fill="none" stroke="#8f8fd0" stroke-dasharray="1.500 1.500"/>`;
    const handle = (x, y, rot) => `<path transform="translate(${x} ${y}) rotate(${rot})" d="M-4 0L-1.500-2.200V-1H1.500V-2.200L4 0 1.500 2.200V1H-1.500V2.200Z" fill="#222"/>`;
    art += handle(272, 136, 45) + handle(585, 136, -45) + handle(272, 405, -45) + handle(585, 405, 45);
    art += handle(428.5, 135, 90) + handle(428.5, 406, 90) + handle(271, 271, 0) + handle(586, 271, 0);
    document.getElementById('drawing').innerHTML = art;
</script>
</body>
</html>
